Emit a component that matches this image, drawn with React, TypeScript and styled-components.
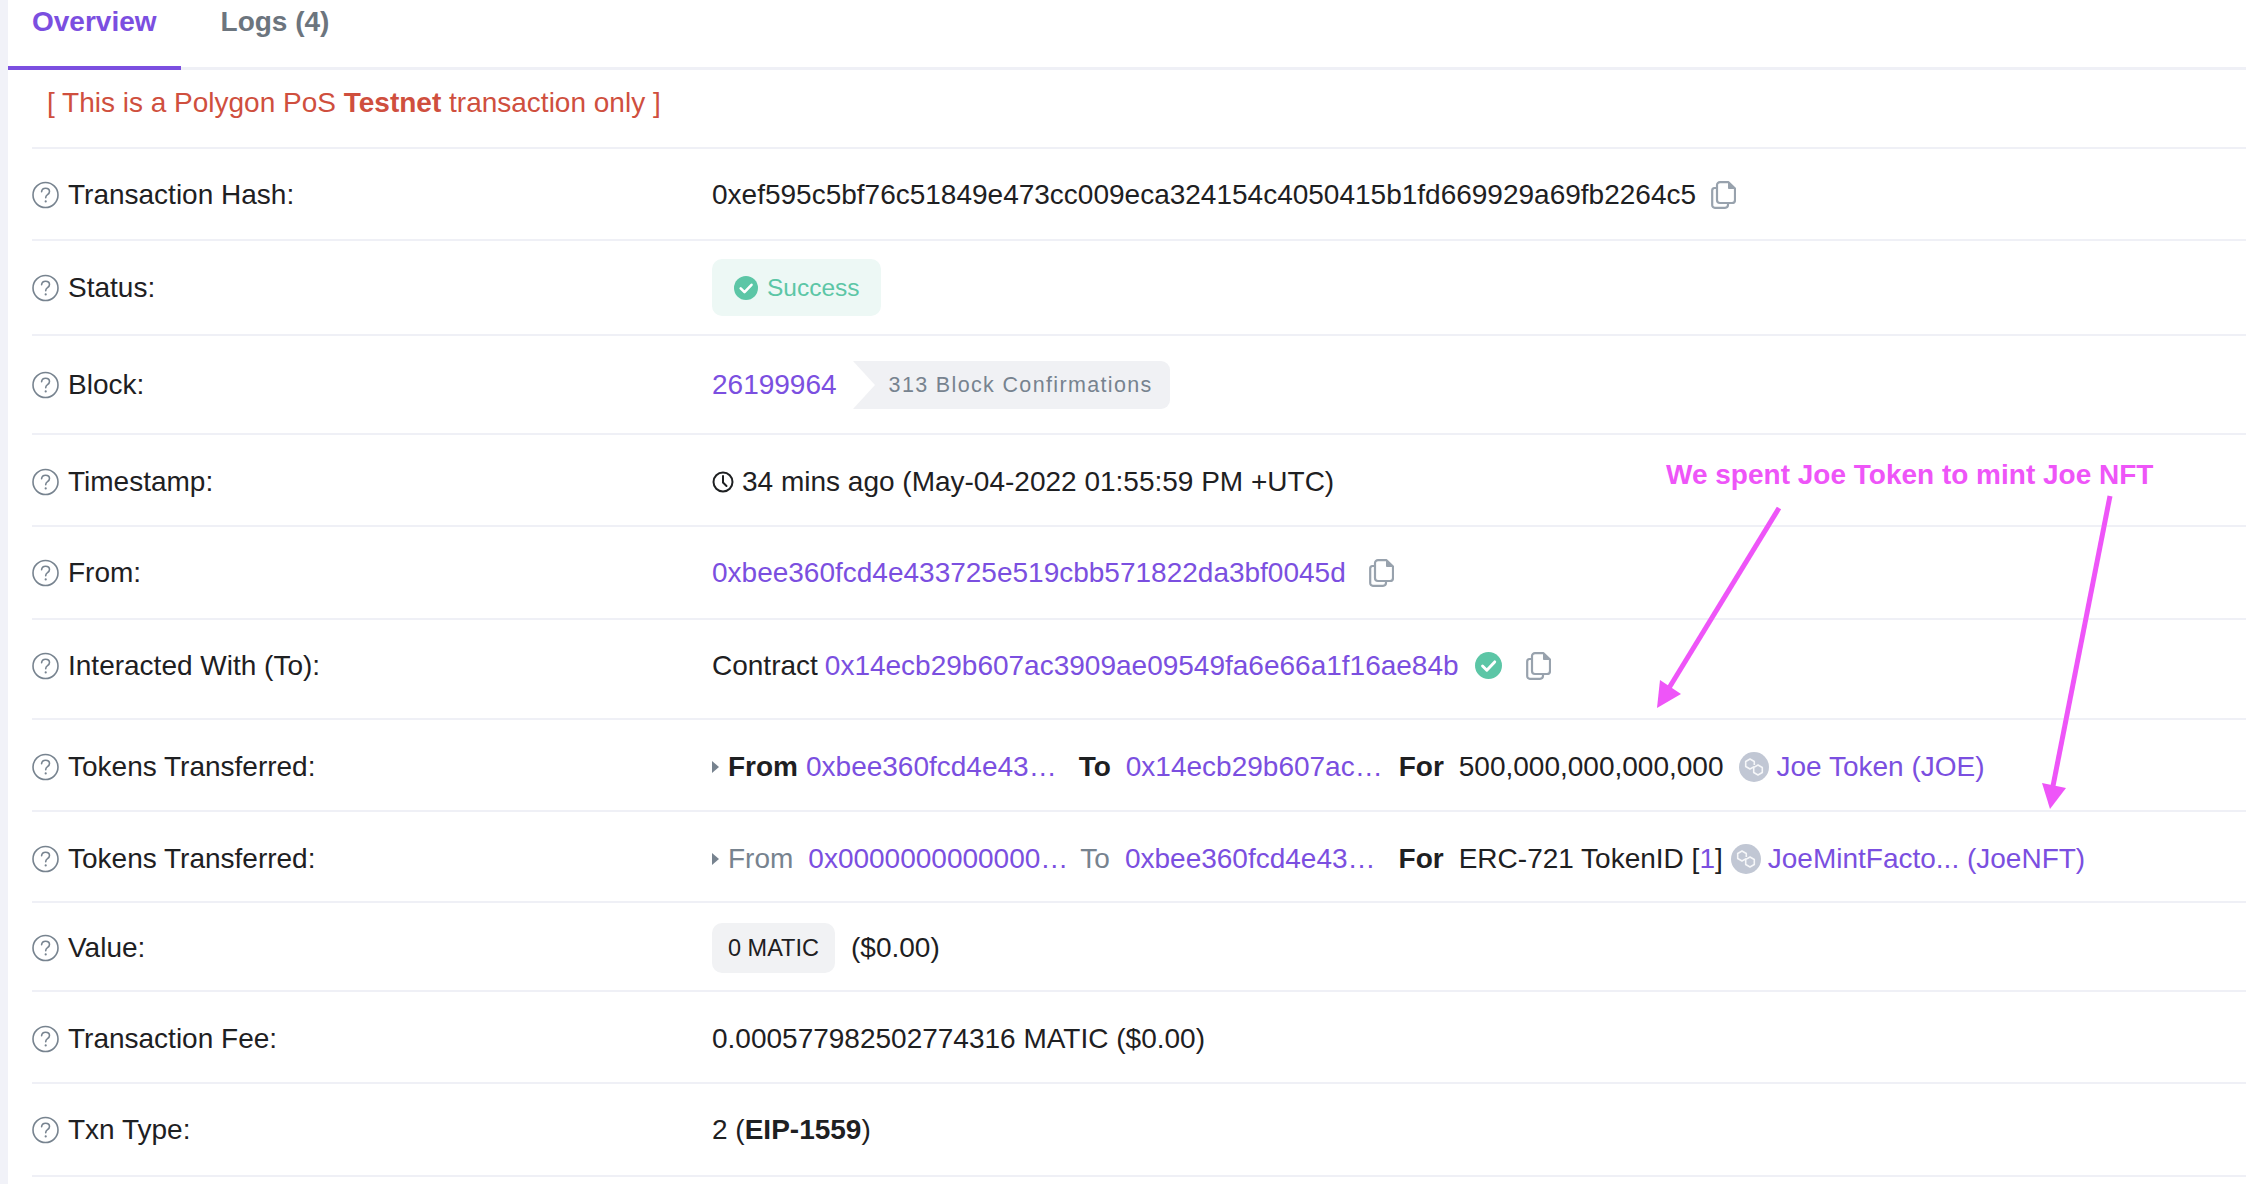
import React from "react";
import styled, { createGlobalStyle } from "styled-components";

const Global = createGlobalStyle`
  html, body { margin: 0; padding: 0; background: #fff; }
  body { font-family: "Liberation Sans", Arial, sans-serif; color: #1e2022; }
`;

const PURPLE = "#7b4fe0";
const GREEN = "#5cc6a6";
const GRAY = "#77838f";
const LINE = "#eff0f6";
const FS = "28px";

const Page = styled.div`
  position: relative;
  display: flex;
  width: 2246px;
  height: 1184px;
  overflow: hidden;
  background: #fff;
`;
const Strip = styled.div`
  flex: 0 0 8px;
  background: #f1f2f8;
`;
const Main = styled.main`
  flex: 1;
  min-width: 0;
`;
const TabBar = styled.nav`
  display: flex;
  height: 70px;
  box-sizing: border-box;
  border-bottom: 3px solid ${LINE};
`;
const Tab = styled.div<{ $active?: boolean }>`
  height: 70px;
  box-sizing: border-box;
  padding: 4px 24px 0;
  margin-right: 16px;
  line-height: 36px;
  font-size: ${FS};
  font-weight: 700;
  color: ${(p) => (p.$active ? PURPLE : "#6c757e")};
  border-bottom: ${(p) => (p.$active ? `4px solid ${PURPLE}` : "none")};
`;
const Rows = styled.section`
  padding-left: 24px;
`;
const Banner = styled.div`
  height: 79px;
  box-sizing: border-box;
  padding: 13px 0 0 15px;
  line-height: 40px;
  font-size: ${FS};
  color: #cf4f3e;
  border-bottom: 2px solid ${LINE};
`;
const Row = styled.div<{ $h: number; $pt?: number; $pb?: number }>`
  display: grid;
  grid-template-columns: 680px 1fr;
  align-items: center;
  height: ${(p) => p.$h}px;
  box-sizing: border-box;
  padding-top: ${(p) => p.$pt ?? 2}px;
  padding-bottom: ${(p) => p.$pb ?? 0}px;
  border-bottom: 2px solid ${LINE};
  font-size: ${FS};
`;
const Label = styled.div`
  display: flex;
  align-items: center;
  gap: 9px;
`;
const Value = styled.div`
  display: flex;
  align-items: center;
  white-space: nowrap;
`;
const Link = styled.span<{ $ml?: number }>`
  color: ${PURPLE};
  margin-left: ${(p) => p.$ml ?? 0}px;
`;
const Word = styled.span<{ $ml?: number; $muted?: boolean; $bold?: boolean }>`
  margin-left: ${(p) => p.$ml ?? 0}px;
  font-weight: ${(p) => (p.$bold ? 700 : 400)};
  color: ${(p) => (p.$muted ? GRAY : "inherit")};
`;
const IconSlot = styled.span<{ $ml?: number }>`
  display: inline-flex;
  margin-left: ${(p) => p.$ml ?? 0}px;
`;
const Success = styled.div`
  display: flex;
  align-items: center;
  gap: 9px;
  width: 169px;
  height: 57px;
  box-sizing: border-box;
  padding-left: 22px;
  border-radius: 10px;
  background: #edf8f5;
  color: ${GREEN};
  font-size: 24.5px;
`;
const Confirm = styled.div`
  position: relative;
  display: flex;
  align-items: center;
  width: 317px;
  height: 48px;
  box-sizing: border-box;
  margin-left: 16px;
  padding-left: 36px;
  border-radius: 0 9px 9px 0;
  background: #f0f1f4;
  color: ${GRAY};
  font-size: 21.5px;
  letter-spacing: 1.35px;
  &::before {
    content: "";
    position: absolute;
    left: 0;
    top: 0;
    border-left: 22px solid #fff;
    border-top: 24px solid transparent;
    border-bottom: 24px solid transparent;
  }
`;
const Amount = styled.div`
  display: flex;
  align-items: center;
  justify-content: center;
  width: 123px;
  height: 50px;
  border-radius: 10px;
  background: #f1f2f4;
  font-size: 23.5px;
`;
const Triangle = styled.span`
  width: 0;
  height: 0;
  margin-right: 9px;
  border-left: 7px solid ${GRAY};
  border-top: 6.5px solid transparent;
  border-bottom: 6.5px solid transparent;
`;
const Note = styled.div`
  position: absolute;
  left: 1666px;
  top: 459px;
  line-height: 32px;
  font-size: ${FS};
  font-weight: 700;
  color: #ee55f8;
  white-space: nowrap;
`;
const ArrowLayer = styled.svg`
  position: absolute;
  left: 0;
  top: 0;
  pointer-events: none;
`;

const Help = () => (
  <svg width="27" height="28" viewBox="0 0 27 28" fill="none">
    <circle cx="13.5" cy="14" r="12.5" stroke={GRAY} strokeWidth="1.6" />
    <path d="M9.6 10.8c.2-2.3 1.8-3.6 4-3.6 2.3 0 3.9 1.4 3.9 3.3 0 1.5-.8 2.3-2 3.2-1.2.8-1.8 1.5-1.8 3" stroke={GRAY} strokeWidth="1.6" strokeLinecap="round" />
    <circle cx="13.7" cy="20.4" r="1.1" fill={GRAY} />
  </svg>
);
const Copy = () => (
  <svg width="25" height="28" viewBox="0 0 25 28" fill="none" stroke="#98a2ad" strokeWidth="2.2" strokeLinejoin="round">
    <path d="M6 7H3.5A2.5 2.5 0 0 0 1.2 9.500V24a2.700 2.700 0 0 0 2.700 2.800H14a3 3 0 0 0 3-3V22" />
    <path d="M9 1.200h8.500L24 7.500V19a3 3 0 0 1-3 3H9a3 3 0 0 1-3-3V4.200a3 3 0 0 1 3-3z" />
    <path d="M17.500 1.500V7.500H24" fill="#98a2ad" strokeWidth="1" />
  </svg>
);
const Check = ({ size }: { size: number }) => (
  <svg width={size} height={size} viewBox="0 0 24 24">
    <circle cx="12" cy="12" r="12" fill={GREEN} />
    <path d="M6.700 12.400l3.800 3.800 7-7.400" fill="none" stroke="#fff" strokeWidth="2.600" strokeLinecap="round" strokeLinejoin="round" />
  </svg>
);
const Clock = () => (
  <svg width="22" height="22" viewBox="0 0 22 22" fill="none" stroke="#1e2022" strokeWidth="2">
    <circle cx="11" cy="11" r="9.500" />
    <path d="M11 5v6.500l3.500 3.500" strokeLinecap="round" />
  </svg>
);
const Polygon = () => (
  <svg width="30" height="30" viewBox="0 0 30 30" fill="none">
    <circle cx="15" cy="15" r="15" fill="#c1c7d4" />
    <path d="M15.300 13V9.500L11 7 6.700 9.500v5L11 17l3.700-2.100v5.600L19 23l4.300-2.500v-5L19 13l-3.700 2.100" stroke="#fff" strokeOpacity="0.85" strokeWidth="1.600" strokeLinejoin="round" />
  </svg>
);

export default function App() {
  return (
    <Page>
      <Global />
      <Strip />
      <Main>
        <TabBar>
          <Tab $active>Overview</Tab>
          <Tab>Logs (4)</Tab>
        </TabBar>
        <Rows>
          <Banner>
            [ This is a Polygon PoS <b>Testnet</b> transaction only ]
          </Banner>
          <Row $h={92} $pt={2}>
            <Label><Help />Transaction Hash:</Label>
            <Value>
              0xef595c5bf76c51849e473cc009eca324154c4050415b1fd669929a69fb2264c5
              <IconSlot $ml={15}><Copy /></IconSlot>
            </Value>
          </Row>
          <Row $h={95} $pt={0}>
            <Label><Help />Status:</Label>
            <Value>
              <Success><Check size={24} />Success</Success>
            </Value>
          </Row>
          <Row $h={99} $pt={1}>
            <Label><Help />Block:</Label>
            <Value>
              <Link>26199964</Link>
              <Confirm>313 Block Confirmations</Confirm>
            </Value>
          </Row>
          <Row $h={92} $pt={4}>
            <Label><Help />Timestamp:</Label>
            <Value>
              <IconSlot><Clock /></IconSlot>
              <Word $ml={8}>34 mins ago (May-04-2022 01:55:59 PM +UTC)</Word>
            </Value>
          </Row>
          <Row $h={93} $pt={1}>
            <Label><Help />From:</Label>
            <Value>
              <Link>0xbee360fcd4e433725e519cbb571822da3bf0045d</Link>
              <IconSlot $ml={23}><Copy /></IconSlot>
            </Value>
          </Row>
          <Row $h={100} $pt={0} $pb={7}>
            <Label><Help />Interacted With (To):</Label>
            <Value>
              Contract
              <Link $ml={7}>0x14ecb29b607ac3909ae09549fa6e66a1f16ae84b</Link>
              <IconSlot $ml={16}><Check size={27} /></IconSlot>
              <IconSlot $ml={24}><Copy /></IconSlot>
            </Value>
          </Row>
          <Row $h={92} $pt={4}>
            <Label><Help />Tokens Transferred:</Label>
            <Value>
              <Triangle />
              <Word $bold>From</Word>
              <Link $ml={8}>0xbee360fcd4e43…</Link>
              <Word $ml={22} $bold>To</Word>
              <Link $ml={15}>0x14ecb29b607ac…</Link>
              <Word $ml={16} $bold>For</Word>
              <Word $ml={15}>500,000,000,000,000</Word>
              <IconSlot $ml={16}><Polygon /></IconSlot>
              <Link $ml={7}>Joe Token (JOE)</Link>
            </Value>
          </Row>
          <Row $h={91} $pt={4}>
            <Label><Help />Tokens Transferred:</Label>
            <Value>
              <Triangle />
              <Word $muted>From</Word>
              <Link $ml={15}>0x0000000000000…</Link>
              <Word $ml={12} $muted>To</Word>
              <Link $ml={15}>0xbee360fcd4e43…</Link>
              <Word $ml={23} $bold>For</Word>
              <Word $ml={15}>ERC-721 TokenID [<Link>1</Link>]</Word>
              <IconSlot $ml={8}><Polygon /></IconSlot>
              <Link $ml={7}>JoeMintFacto... (JoeNFT)</Link>
            </Value>
          </Row>
          <Row $h={89} $pt={3}>
            <Label><Help />Value:</Label>
            <Value>
              <Amount>0 MATIC</Amount>
              <Word $ml={16}>($0.00)</Word>
            </Value>
          </Row>
          <Row $h={92} $pt={3}>
            <Label><Help />Transaction Fee:</Label>
            <Value>0.000577982502774316 MATIC ($0.00)</Value>
          </Row>
          <Row $h={93} $pt={1}>
            <Label><Help />Txn Type:</Label>
            <Value>2 (<b>EIP-1559</b>)</Value>
          </Row>
        </Rows>
      </Main>
      <Note>We spent Joe Token to mint Joe NFT</Note>
      <ArrowLayer width="2246" height="1184" viewBox="0 0 2246 1184">
        <g fill="#ee55f8" stroke="#ee55f8">
          <line x1="1779" y1="508" x2="1669" y2="688" strokeWidth="5" />
          <polygon points="1657,708 1660,680 1681,694" strokeWidth="0" />
          <line x1="2110" y1="496" x2="2053" y2="786" strokeWidth="5" />
          <polygon points="2050,809 2042,783 2066,788" strokeWidth="0" />
        </g>
      </ArrowLayer>
    </Page>
  );
}
